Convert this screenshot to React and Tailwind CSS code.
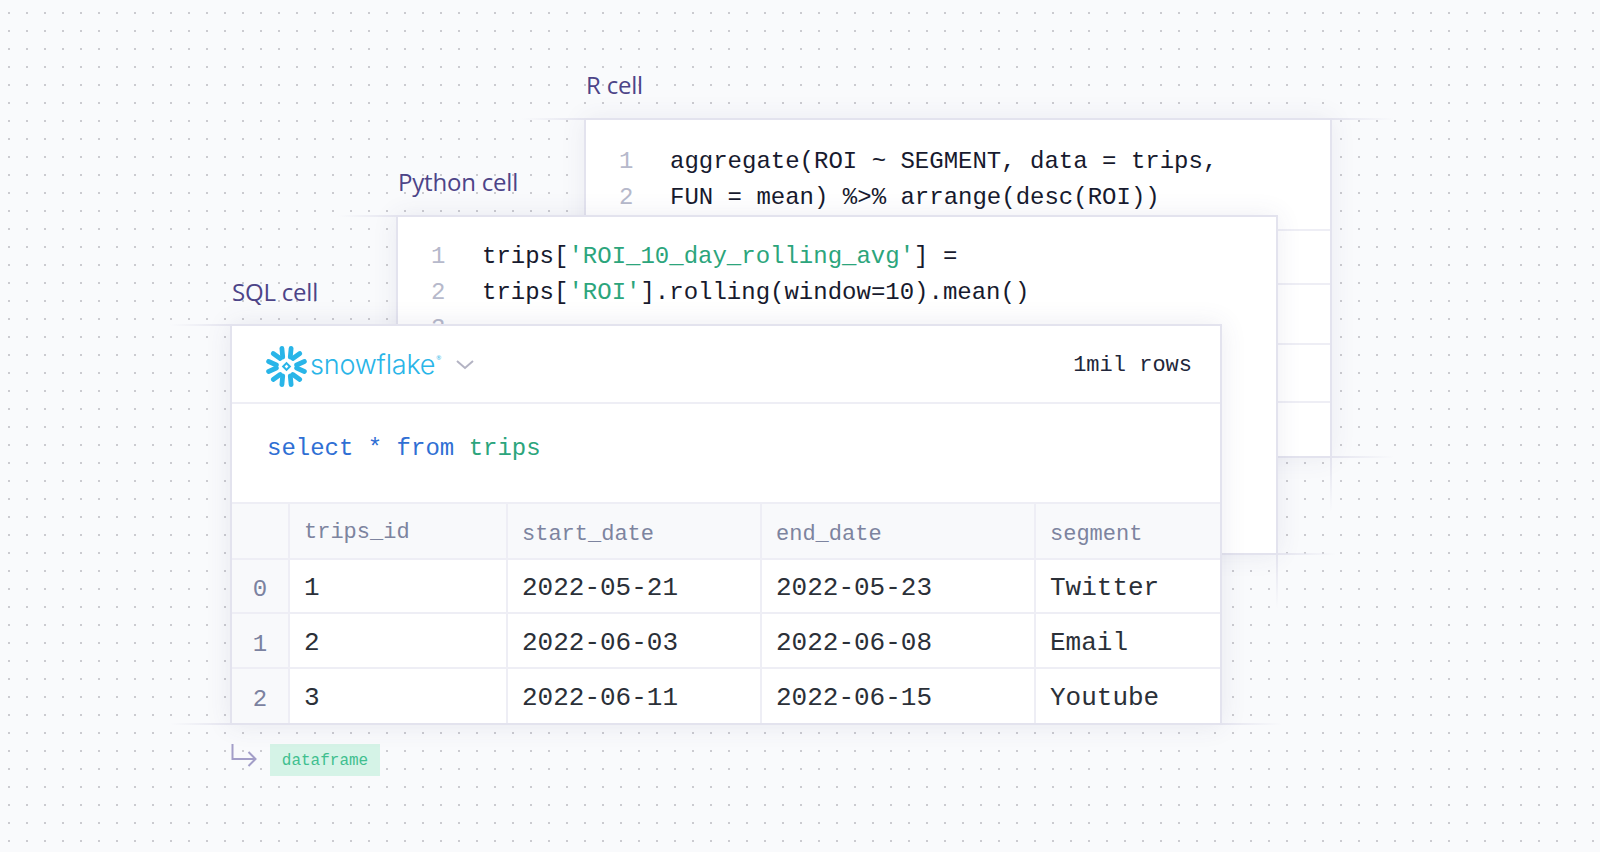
const mono = "font-['Liberation_Mono',monospace]";
const label = "font-['Open_Sans',sans-serif] text-[24px] leading-[32px] tracking-[-0.2px] text-[#4d4488]";

function HLine({ className, toLeft }) {
  return (
    <div
      className={
        "absolute h-[2px] " +
        (toLeft
          ? "bg-[linear-gradient(to_left,#e3e3ee,transparent)] "
          : "bg-[linear-gradient(to_right,#e3e3ee,transparent)] ") +
        className
      }
    />
  );
}

function VLine({ className }) {
  return (
    <div
      className={
        "absolute w-[2px] bg-[linear-gradient(to_bottom,#e3e3ee,transparent)] " + className
      }
    />
  );
}

function CodeLines({ lines }) {
  return (
    <div className={`${mono} pl-[33px] text-[24px] leading-[36px] text-[#171a2e] whitespace-pre`}>
      {lines.map((line, i) => (
        <div key={i} className="flex">
          <span className="w-[51px] text-[#b6b9cb]">{i + 1}</span>
          <span>{line}</span>
        </div>
      ))}
    </div>
  );
}

function SnowflakeMark() {
  const bars = [0, 60, 120, 180, 240, 300];
  return (
    <svg width="41" height="41" viewBox="-20.5 -20.5 41 41" className="shrink-0 mt-[4px] ml-[1px]">
      {bars.map((a) => (
        <g key={a} transform={`rotate(${a})`} stroke="#29b5e8" strokeWidth="4.8" strokeLinecap="round" fill="none">
          <path d="M-4.6 -18 L-3.8 -9.5" />
          <path d="M4.6 -18 L3.8 -9.5" />
        </g>
      ))}
      <path d="M0 -4.8 L4.8 0 L0 4.8 L-4.8 0 Z M0 -1.9 L-1.9 0 L0 1.9 L1.9 0 Z" fill="#29b5e8" fillRule="evenodd" />
    </svg>
  );
}

const rows = [
  ["0", "1", "2022-05-21", "2022-05-23", "Twitter", "h-[54px]"],
  ["1", "2", "2022-06-03", "2022-06-08", "Email", "h-[55px]"],
  ["2", "3", "2022-06-11", "2022-06-15", "Youtube", "h-[54px]"],
];

export default function App() {
  return (
    <div className="h-[852px] w-full overflow-hidden bg-[#f9fafc] bg-[radial-gradient(circle_at_9px_13px,#cbcbd0_1.2px,transparent_1.2px)] bg-[length:18px_18px] grid">
      {/* R cell */}
      <div className="[grid-area:1/1] ml-[584px] pt-[69px]">
        <div className={`${label} h-[49px] pl-[2px]`}>R cell</div>
        <div className="relative w-[748px] h-[340px] bg-white border-2 border-[#e3e3ee] shadow-[0_0_24px_rgba(70,70,120,0.08)]">
          <HLine toLeft className="top-[-2px] left-[-64px] w-[64px]" />
          <HLine className="top-[-2px] right-[-64px] w-[64px]" />
          <HLine className="bottom-[-2px] right-[-64px] w-[64px]" />
          <VLine className="top-full right-[-2px] h-[56px]" />
          <div className="h-[111px] pt-[24px] border-b-2 border-[#eeeef5]">
            <CodeLines lines={["aggregate(ROI ~ SEGMENT, data = trips,", "FUN = mean) %>% arrange(desc(ROI))"]} />
          </div>
          <div className="h-[54px] border-b-2 border-[#eeeef5]" />
          <div className="h-[60px] border-b-2 border-[#eeeef5]" />
          <div className="h-[58px] border-b-2 border-[#eeeef5]" />
        </div>
      </div>

      {/* Python cell */}
      <div className="[grid-area:1/1] ml-[396px] pt-[166px]">
        <div className={`${label} h-[49px] pl-[2px]`}>Python cell</div>
        <div className="relative w-[882px] h-[340px] bg-white border-2 border-[#e3e3ee] shadow-[0_0_24px_rgba(70,70,120,0.09)]">
          <HLine toLeft className="top-[-2px] left-[-60px] w-[60px]" />
          <HLine className="bottom-[-2px] right-[-60px] w-[60px]" />
          <VLine className="top-full right-[-2px] h-[56px]" />
          <div className="pt-[22px]">
            <CodeLines
              lines={[
                <>
                  trips[<span className="text-[#2ca57c]">'ROI_10_day_rolling_avg'</span>] =
                </>,
                <>
                  trips[<span className="text-[#2ca57c]">'ROI'</span>].rolling(window=10).mean()
                </>,
                "",
              ]}
            />
          </div>
        </div>
      </div>

      {/* SQL cell */}
      <div className="[grid-area:1/1] ml-[230px] pt-[276px]">
        <div className={`${label} h-[48px] pl-[2px]`}>SQL cell</div>
        <div className="relative w-[992px] h-[401px] bg-white border-2 border-[#e3e3ee] shadow-[0_0_24px_rgba(70,70,120,0.1)]">
          <HLine toLeft className="top-[-2px] left-[-62px] w-[62px]" />
          <HLine toLeft className="bottom-[-2px] left-[-62px] w-[62px]" />
          <HLine className="bottom-[-2px] right-[-62px] w-[62px]" />
          <div className="h-[78px] border-b-2 border-[#eeeef5] flex items-center pl-[33px] pr-[28px]">
            <SnowflakeMark />
            <span className="ml-[3px] mt-[1px] font-['Inter',sans-serif] font-light text-[27px] leading-none tracking-[-0.2px] text-[#29b5e8]">
              snowflake
            </span>
            <span className="self-start mt-[29px] ml-[1px] text-[6px] leading-none text-[#29b5e8] font-['Open_Sans',sans-serif]">®</span>
            <svg width="20" height="11" viewBox="0 0 20 11" fill="none" className="ml-[14px]">
              <path d="M2 2 L10 9 L18 2" stroke="#b3b3c3" strokeWidth="2" />
            </svg>
            <span className={`${mono} ml-auto mt-[3px] text-[22px] text-[#22263a]`}>1mil rows</span>
          </div>
          <div className={`${mono} h-[98px] pl-[35px] pt-[27px] text-[24px] leading-[36px] text-[#2f6fd4]`}>
            select * from <span className="text-[#2ca57c]">trips</span>
          </div>
          <div className={mono}>
            <div className="flex h-[58px] bg-[#f8f9fb] border-y-2 border-[#eeeef5] text-[22px] text-[#7d849f]">
              <div className="w-[58px] border-r-2 border-[#eeeef5]" />
              <div className="w-[218px] border-r-2 border-[#eeeef5] pl-[14px] pt-[2px] flex items-center">trips_id</div>
              <div className="w-[254px] border-r-2 border-[#eeeef5] pl-[14px] pt-[6px] flex items-center">start_date</div>
              <div className="w-[274px] border-r-2 border-[#eeeef5] pl-[14px] pt-[6px] flex items-center">end_date</div>
              <div className="flex-1 pl-[14px] pt-[6px] flex items-center">segment</div>
            </div>
            {rows.map((r, i) => (
              <div key={r[0]} className={`flex ${r[5]} ${i < 2 ? "border-b-2 border-[#eeeef5]" : ""} text-[26px] text-[#2b3038]`}>
                <div className="w-[58px] bg-[#f8f9fb] border-r-2 border-[#eeeef5] flex items-center justify-center pt-[8px] text-[24px] text-[#7b82a0]">{r[0]}</div>
                <div className="w-[218px] border-r-2 border-[#eeeef5] pl-[14px] pt-[5px] flex items-center">{r[1]}</div>
                <div className="w-[254px] border-r-2 border-[#eeeef5] pl-[14px] pt-[5px] flex items-center">{r[2]}</div>
                <div className="w-[274px] border-r-2 border-[#eeeef5] pl-[14px] pt-[5px] flex items-center">{r[3]}</div>
                <div className="flex-1 pl-[14px] pt-[5px] flex items-center">{r[4]}</div>
              </div>
            ))}
          </div>
        </div>
        <div className="mt-[19px] flex items-start">
          <svg width="28" height="26" viewBox="0 0 28 26" fill="none" className="ml-[1px]">
            <path d="M1.5 0 V15 H24 M17.5 8 L24.5 15 L17.5 22" stroke="#a39ec8" strokeWidth="2" />
          </svg>
          <div className={`${mono} ml-[11px] w-[110px] h-[32px] pt-[1px] bg-[#d5f3e7] text-[#3fbf8f] text-[16px] leading-[32px] text-center`}>
            dataframe
          </div>
        </div>
      </div>
    </div>
  );
}
